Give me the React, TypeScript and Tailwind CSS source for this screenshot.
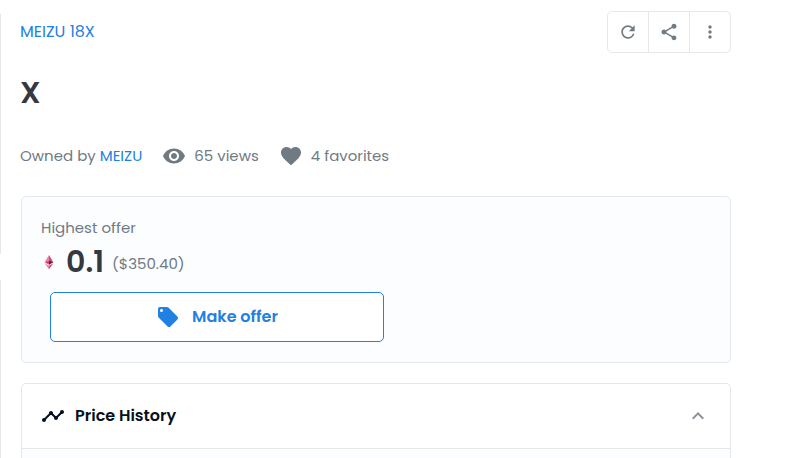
import {
  MdExpandLess,
  MdFavorite,
  MdLocalOffer,
  MdMoreVert,
  MdRefresh,
  MdShare,
  MdTimeline,
  MdVisibility,
} from "react-icons/md";

const toolbar = [
  { label: "Refresh", Icon: MdRefresh },
  { label: "Share", Icon: MdShare },
  { label: "More", Icon: MdMoreVert },
];

function EthIcon() {
  return (
    <svg width="10" height="16" viewBox="0 0 10 16" aria-hidden="true">
      <path d="M5 1 0.6 8.2 5 6.3Z" fill="#ee7fa6" />
      <path d="M5 1 9.4 8.2 5 6.3Z" fill="#c74d78" />
      <path d="M5 6.2 0.6 8.2 5 10.8Z" fill="#e0447c" />
      <path d="M5 6.2 9.4 8.2 5 10.8Z" fill="#6b1a3a" />
      <path d="M0.6 9.2 5 11.8V15.2Z" fill="#ee7fa6" />
      <path d="M9.4 9.2 5 11.8V15.2Z" fill="#c9487a" />
    </svg>
  );
}

function Toolbar() {
  return (
    <div className="flex divide-x divide-[#e5e8eb] rounded-[5px] border border-[#e5e8eb]">
      {toolbar.map(({ label, Icon }) => (
        <button
          key={label}
          type="button"
          aria-label={label}
          className="flex h-10 w-10 box-content items-center justify-center text-[#707a83]"
        >
          <Icon size={20} />
        </button>
      ))}
    </div>
  );
}

export default function App() {
  return (
    <div className="flex min-h-screen bg-white font-['Poppins','Inter',sans-serif] text-base text-[#707a83]">
      <div className="flex w-px flex-col gap-[26px] pt-3.5" aria-hidden="true">
        <div className="h-60 bg-[#e5e8eb]" />
        <div className="grow bg-[#e5e8eb]" />
      </div>

      <main className="min-w-0 grow pt-[11px] pr-[73px] pl-[19px]">
        <header className="flex items-center justify-between">
          <a href="#collection" className="text-base text-[#2081e2]">
            MEIZU 18X
          </a>
          <Toolbar />
        </header>

        <h1 className="mt-[17px] text-[30px] leading-[45px] font-semibold text-[#353840]">X</h1>

        <div className="mt-[29px] flex h-6 items-center text-[15px]">
          <span>
            Owned by{" "}
            <a href="#owner" className="text-[#2081e2]">
              MEIZU
            </a>
          </span>
          <span className="ml-5 flex items-center gap-2">
            <MdVisibility size={24} />
            65 views
          </span>
          <span className="ml-5 flex items-center gap-2">
            <MdFavorite size={24} />4 favorites
          </span>
        </div>

        <div className="mt-7 flex flex-col gap-5 pl-px">
          <section className="rounded-[5px] border border-[#e5e8eb] bg-[#fbfdff] px-[19px] pt-[19px] pb-5">
            <p className="text-[15px] leading-6">Highest offer</p>
            <div className="flex h-11 items-center">
              <span className="flex w-4 justify-center">
                <EthIcon />
              </span>
              <span className="ml-[9px] text-[30px] leading-10 font-semibold text-[#353840]">0.1</span>
              <span className="ml-2 pt-1 text-[15px]">($350.40)</span>
            </div>
            <button
              type="button"
              className="mt-2 ml-[9px] flex h-[50px] w-full max-w-[334px] items-center justify-center gap-3 rounded-[5px] border border-[#2081e2] bg-white font-semibold text-[#2081e2]"
            >
              <MdLocalOffer size={24} />
              Make offer
            </button>
          </section>

          <section className="rounded-t-[5px] border border-b-0 border-[#e5e8eb] bg-[#fbfdff]">
            <h2>
              <button
                type="button"
                aria-expanded="true"
                className="flex h-[65px] w-full items-center rounded-t-[5px] border-b border-[#e5e8eb] bg-white pr-5 pl-[19px] font-semibold text-[#04111d]"
              >
                <MdTimeline size={24} />
                <span className="ml-2.5">Price History</span>
                <MdExpandLess size={24} className="ml-auto text-[#8a939b]" />
              </button>
            </h2>
            <div className="h-[9px]" />
          </section>
        </div>
      </main>
    </div>
  );
}
